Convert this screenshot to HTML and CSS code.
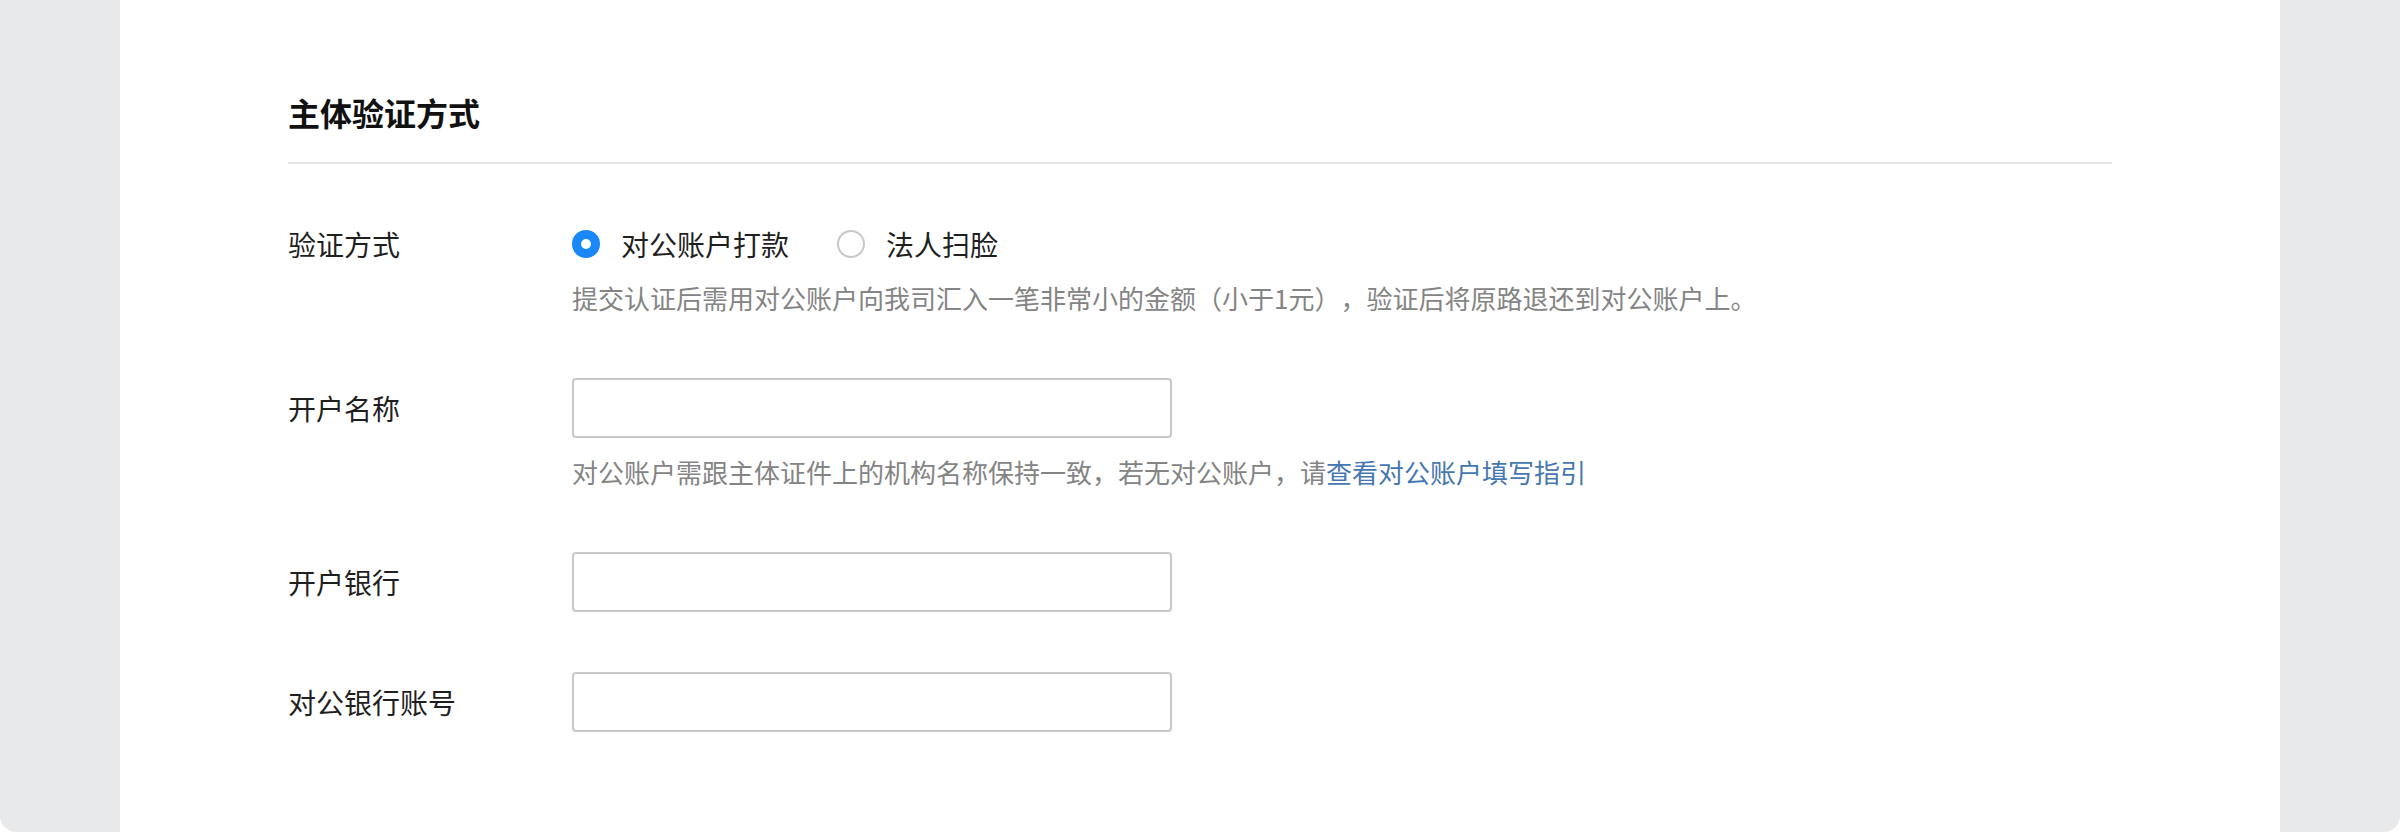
FILE: index.html
```html
<!DOCTYPE html>
<html lang="zh-CN">
<head>
    <meta charset="UTF-8">
    <meta name="viewport" content="width=device-width, initial-scale=1.0">
    <title>主体验证方式</title>
    <link rel="stylesheet" href="styles.css">
</head>
<body>
    <div class="page">
        <div class="card">
            <h2 class="section-title">主体验证方式</h2>
            <div class="divider"></div>

            <form class="form" id="verifyForm">
                <div class="field field-radio">
                    <div class="field-label">验证方式</div>
                    <div class="field-control">
                        <div class="radio-group">
                            <label class="radio">
                                <input type="radio" name="method" value="transfer" checked>
                                <span>对公账户打款</span>
                            </label>
                            <label class="radio">
                                <input type="radio" name="method" value="face">
                                <span>法人扫脸</span>
                            </label>
                        </div>
                        <p class="hint">提交认证后需用对公账户向我司汇入一笔非常小的金额（小于1元），验证后将原路退还到对公账户上。</p>
                    </div>
                </div>

                <div class="field">
                    <label class="field-label" for="accountName">开户名称</label>
                    <div class="field-control">
                        <input type="text" id="accountName" class="text-input">
                        <p class="hint">对公账户需跟主体证件上的机构名称保持一致，若无对公账户，请<a href="#" class="link">查看对公账户填写指引</a></p>
                    </div>
                </div>

                <div class="field">
                    <label class="field-label" for="bank">开户银行</label>
                    <div class="field-control">
                        <input type="text" id="bank" class="text-input">
                    </div>
                </div>

                <div class="field">
                    <label class="field-label" for="accountNo">对公银行账号</label>
                    <div class="field-control">
                        <input type="text" id="accountNo" class="text-input">
                    </div>
                </div>
            </form>
        </div>
    </div>
</body>
</html>
```

FILE: styles.css
```css
body {
    margin: 0;
    background: #fff;
    font-family: "Noto Sans CJK SC", "Noto Sans", sans-serif;
    color: #1f1f1f;
    text-spacing-trim: space-all;
}
.page {
    height: 832px;
    padding: 0 120px;
    background: #e8e9eb;
    border-radius: 0 0 16px 16px;
    box-sizing: border-box;
}
.card {
    height: 100%;
    background: #fff;
    padding: 90px 168px 0;
    box-sizing: border-box;
}
.section-title {
    margin: 0;
    font-size: 32px;
    line-height: 44px;
    font-weight: 600;
    color: #111;
}
.divider {
    height: 2px;
    margin-top: 28px;
    background: #e5e5ea;
}
.form {
    display: flex;
    flex-direction: column;
    gap: 60px;
    margin-top: 60px;
}
.field {
    display: flex;
    align-items: flex-start;
}
.field-label {
    width: 284px;
    flex-shrink: 0;
    font-size: 28px;
    line-height: 60px;
    color: #1f1f1f;
}
.field-radio .field-label {
    line-height: 40px;
}
.field-control {
    flex: 1;
}
.radio-group {
    display: flex;
    align-items: center;
    gap: 48px;
    height: 40px;
}
.radio {
    display: flex;
    align-items: center;
    gap: 21px;
    font-size: 28px;
    line-height: 40px;
    cursor: pointer;
}
.radio input {
    appearance: none;
    -webkit-appearance: none;
    width: 28px;
    height: 28px;
    margin: 0;
    border: 2px solid #c8c8c8;
    border-radius: 50%;
    background: #fff;
    box-sizing: border-box;
}
.radio input:checked {
    border: 9px solid #1a88f8;
}
.hint {
    margin: 14px 0 0;
    font-size: 26px;
    line-height: 40px;
    color: #848484;
}
.link {
    color: #4577b2;
    text-decoration: none;
}
.text-input {
    display: block;
    width: 600px;
    height: 60px;
    padding: 0 16px;
    border: 2px solid #c8c8c8;
    border-radius: 4px;
    font-size: 28px;
    font-family: inherit;
    box-sizing: border-box;
    outline: none;
}
.text-input:focus {
    border-color: #1a88f8;
}
```
